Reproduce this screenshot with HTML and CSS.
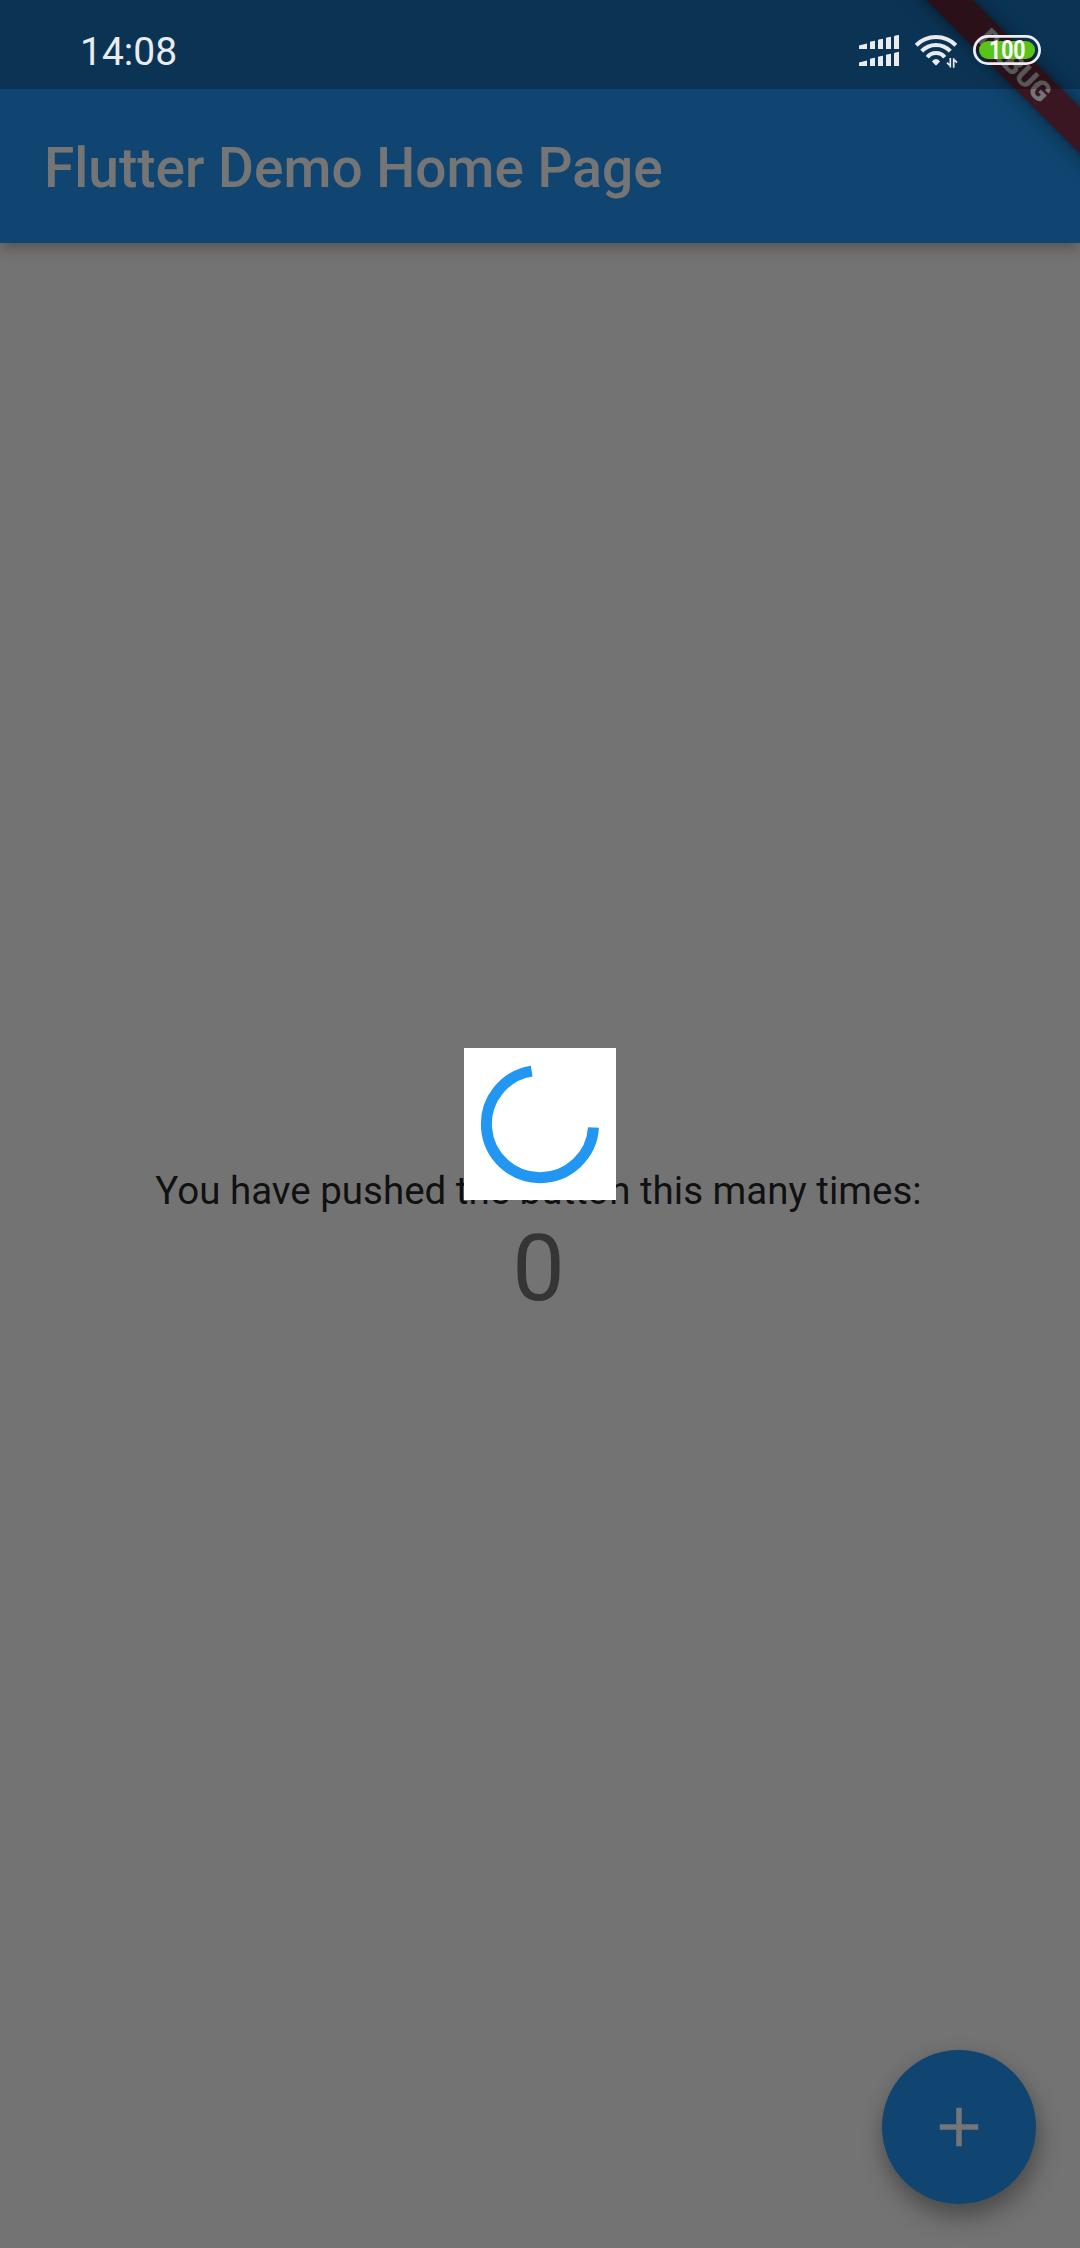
FILE: index.html
```html
<!DOCTYPE html>
<html lang="en">
<head>
<meta charset="utf-8">
<title>Flutter Demo</title>
<link rel="stylesheet" href="styles.css">
</head>
<body>
<div class="screen">
  <header class="app-bar">
    <h1 class="title">Flutter Demo Home Page</h1>
  </header>
  <main class="content">
    <p class="message">You have pushed the button this many times:</p>
    <p class="counter">0</p>
  </main>
  <button class="fab" aria-label="Increment">
    <svg width="66" height="66" viewBox="0 0 24 24"><path d="M19 13h-6v6h-2v-6H5v-2h6V5h2v6h6v2z" fill="#fff"/></svg>
  </button>
  <div class="debug-ribbon">DEBUG</div>
  <div class="scrim">
    <div class="dialog">
      <svg class="spinner" viewBox="0 0 120 120"><path d="M113.5 63.5A53.6 53.6 0 1 1 51.7 7.1" fill="none" stroke="#2196f3" stroke-width="11"/></svg>
    </div>
  </div>
  <div class="status-bar">
    <span class="time">14:08</span>
    <svg class="signal" width="40" height="32" viewBox="859 35 40 32" fill="#e9ebef">
      <g id="bars"><path d="M859 45.6l8-2V49h-8zM870 42.6q0-.8.8-1l4.2-.8V49h-5zM878 40.6q0-.8.8-1l4.2-.9V49h-5zM886 38.6q0-.8.8-1l4.2-.9V49h-5zM894 36.8q0-.8.8-1l4.2-1V49h-5z"/></g>
      <use href="#bars" y="17"/>
    </svg>
    <svg class="wifi" width="44" height="34" viewBox="914 34 44 34">
      <g fill="none" stroke="#e9ebef" stroke-width="4">
        <path d="M916.2 45.2Q924.500 37.100 936 37.100T955.800 45.200"/>
        <path d="M921.700 51.200Q927.500 45 936 45T950.300 51.200"/>
        <path d="M927.300 57.300Q930.500 53 936 53T944.700 57.300"/>
      </g>
      <path d="M932 61.500Q933 59 936 59T940 61.500L937 64.700Q936 65.700 935 64.700Z" fill="#e9ebef"/>
      <path d="M950.300 58v9.500M947 62.700l2.500 2.500M953.700 67.700v-9.500M957 62.700l-2.500-2.500" fill="none" stroke="#e9ebef" stroke-width="1.700"/>
    </svg>
    <svg class="battery" width="68" height="30" viewBox="0 0 68 30">
      <rect x="1.400" y="1.400" width="65.200" height="27.200" rx="13.600" fill="none" stroke="#eceef1" stroke-width="2.800"/>
      <rect x="6" y="6" width="56" height="18" rx="9" fill="#5ac31a"/>
      <text x="16" y="24" class="battery-text" textLength="36.500" lengthAdjust="spacingAndGlyphs">100</text>
    </svg>
  </div>
</div>
</body>
</html>
```
FILE: styles.css
```css
* { box-sizing: border-box; }

body, h1, p { margin: 0; }

.screen {
  position: relative;
  display: flex;
  flex-direction: column;
  width: 1080px;
  height: 2248px;
  overflow: hidden;
  background: #fafafa;
  font-family: Roboto, "Liberation Sans", sans-serif;
}

.app-bar {
  display: flex;
  align-items: center;
  height: 243px;
  padding: 92px 44px 0;
  background: #2196f3;
  box-shadow: 0 4px 14px rgba(0, 0, 0, .3);
}

.title {
  color: #fff;
  font-size: 55px;
  font-weight: 500;
  line-height: 64px;
  white-space: nowrap;
}

.content {
  flex: 1;
  display: flex;
  flex-direction: column;
  align-items: center;
  justify-content: center;
  padding-right: 3px;
}

.message {
  color: rgba(0, 0, 0, .87);
  font-size: 38.5px;
  line-height: 45px;
}

.counter {
  color: rgba(0, 0, 0, .54);
  font-size: 93.5px;
  line-height: 110px;
}

.fab {
  position: absolute;
  right: 44px;
  bottom: 44px;
  display: flex;
  align-items: center;
  justify-content: center;
  width: 154px;
  height: 154px;
  padding: 0;
  border: 0;
  border-radius: 50%;
  background: #2196f3;
  box-shadow: 3px 14px 24px rgba(0, 0, 0, .3), 0 3px 20px rgba(0, 0, 0, .1);
}

.debug-ribbon {
  position: absolute;
  left: 864.700px;
  top: 49px;
  width: 300px;
  height: 33px;
  transform: rotate(45deg);
  background: #7c3148;
  box-shadow: 0 0 17px rgba(0, 0, 0, .5);
  color: #fff;
  font-size: 28px;
  font-weight: 900;
  line-height: 33px;
  text-align: center;
}

.scrim {
  position: absolute;
  inset: 0;
  display: flex;
  align-items: center;
  justify-content: center;
  background: rgba(0, 0, 0, .54);
}

.dialog {
  display: flex;
  align-items: center;
  justify-content: center;
  width: 151.250px;
  height: 151.250px;
  background: #fff;
}

.spinner {
  width: 120px;
  height: 120px;
}

.status-bar {
  position: absolute;
  inset: 0 0 auto;
  display: flex;
  align-items: flex-start;
  height: 89px;
  padding: 35px 39px 0 80px;
  background: rgba(0, 0, 0, .25);
}

.time {
  margin: -6px auto 0 0;
  color: #e9ebef;
  font-size: 39px;
  line-height: 46px;
}

.signal { margin-right: 15px; }

.wifi { margin: -1px 15px 0 0; }

.battery-text {
  fill: #fff;
  font-size: 25px;
  font-weight: 700;
}
```
